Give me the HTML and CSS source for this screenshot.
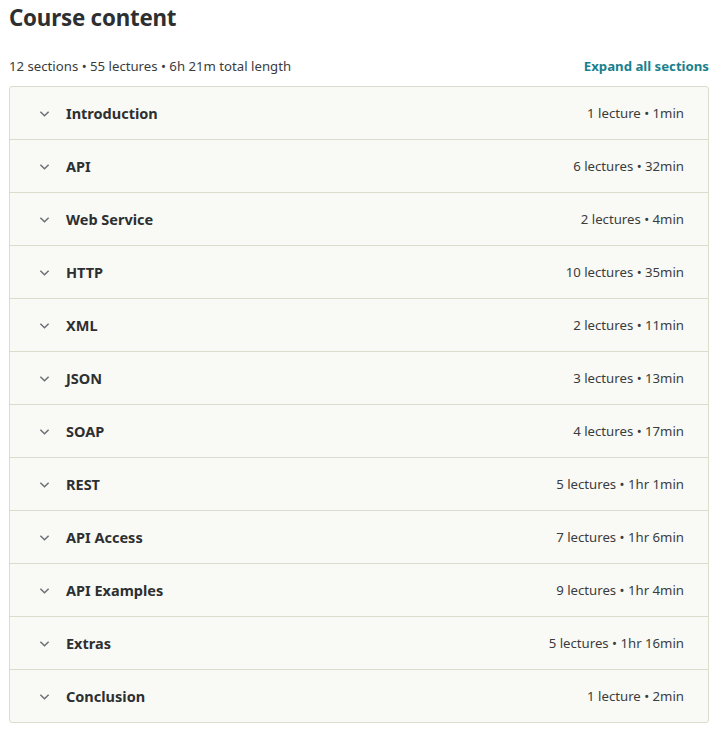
FILE: index.html
```html
<!DOCTYPE html>
<html>
<head>
<meta charset="utf-8">
<link rel="stylesheet" href="styles.css">
</head>
<body>
<div class="page">
  <h2 class="title">Course content</h2>
  <div class="meta">
    <span class="stats">12 sections • 55 lectures • 6h 21m total length</span>
    <span class="expand">Expand all sections</span>
  </div>
  <div class="sections">
    <div class="row"><svg class="chev" viewBox="0 0 12 8"><path d="M1.5 1.5 L6 6 L10.5 1.5"/></svg><span class="name">Introduction</span><span class="info">1 lecture • 1min</span></div>
    <div class="row"><svg class="chev" viewBox="0 0 12 8"><path d="M1.5 1.5 L6 6 L10.5 1.5"/></svg><span class="name">API</span><span class="info">6 lectures • 32min</span></div>
    <div class="row"><svg class="chev" viewBox="0 0 12 8"><path d="M1.5 1.5 L6 6 L10.5 1.5"/></svg><span class="name">Web Service</span><span class="info">2 lectures • 4min</span></div>
    <div class="row"><svg class="chev" viewBox="0 0 12 8"><path d="M1.5 1.5 L6 6 L10.5 1.5"/></svg><span class="name">HTTP</span><span class="info">10 lectures • 35min</span></div>
    <div class="row"><svg class="chev" viewBox="0 0 12 8"><path d="M1.5 1.5 L6 6 L10.5 1.5"/></svg><span class="name">XML</span><span class="info">2 lectures • 11min</span></div>
    <div class="row"><svg class="chev" viewBox="0 0 12 8"><path d="M1.5 1.5 L6 6 L10.5 1.5"/></svg><span class="name">JSON</span><span class="info">3 lectures • 13min</span></div>
    <div class="row"><svg class="chev" viewBox="0 0 12 8"><path d="M1.5 1.5 L6 6 L10.5 1.5"/></svg><span class="name">SOAP</span><span class="info">4 lectures • 17min</span></div>
    <div class="row"><svg class="chev" viewBox="0 0 12 8"><path d="M1.5 1.5 L6 6 L10.5 1.5"/></svg><span class="name">REST</span><span class="info">5 lectures • 1hr 1min</span></div>
    <div class="row"><svg class="chev" viewBox="0 0 12 8"><path d="M1.5 1.5 L6 6 L10.5 1.5"/></svg><span class="name">API Access</span><span class="info">7 lectures • 1hr 6min</span></div>
    <div class="row"><svg class="chev" viewBox="0 0 12 8"><path d="M1.5 1.5 L6 6 L10.5 1.5"/></svg><span class="name">API Examples</span><span class="info">9 lectures • 1hr 4min</span></div>
    <div class="row"><svg class="chev" viewBox="0 0 12 8"><path d="M1.5 1.5 L6 6 L10.5 1.5"/></svg><span class="name">Extras</span><span class="info">5 lectures • 1hr 16min</span></div>
    <div class="row"><svg class="chev" viewBox="0 0 12 8"><path d="M1.5 1.5 L6 6 L10.5 1.5"/></svg><span class="name">Conclusion</span><span class="info">1 lecture • 2min</span></div>
  </div>
</div>
</body>
</html>
```
FILE: styles.css
```css
html, body {
  margin: 0;
  padding: 0;
  background: #ffffff;
}
body {
  font-family: "Noto Sans", "Open Sans", sans-serif;
  color: #2d2f31;
}
.page {
  width: 700px;
  margin-left: 9px;
}
.title {
  margin: 0;
  padding-top: 2px;
  font-size: 22.3px;
  line-height: 32px;
  font-weight: 700;
  color: #2d2f31;
  letter-spacing: -0.2px;
}
.meta {
  display: flex;
  justify-content: space-between;
  align-items: center;
  margin-top: 12px;
  height: 40px;
  font-size: 13.2px;
}
.stats {
  color: #3a3c3e;
}
.expand {
  color: #1a7f8e;
  font-weight: 700;
  font-size: 13.2px;
}
.sections {
  border: 1px solid #dcdccd;
  border-radius: 3px;
  background: #f9f9f5;
}
.row {
  display: flex;
  align-items: center;
  height: 52px;
  padding: 0 24px 0 29px;
  border-top: 1px solid #dcdccd;
}
.row:first-child {
  border-top: none;
  height: 52px;
}
.chev {
  width: 11px;
  height: 8px;
  fill: none;
  stroke: #6a6f73;
  stroke-width: 1.6;
  margin-right: 16px;
  margin-top: 1px;
}
.name {
  flex: 1;
  font-weight: 700;
  font-size: 14.5px;
  color: #2d2f31;
}
.info {
  font-size: 13.2px;
  color: #3a3c3e;
}
```
